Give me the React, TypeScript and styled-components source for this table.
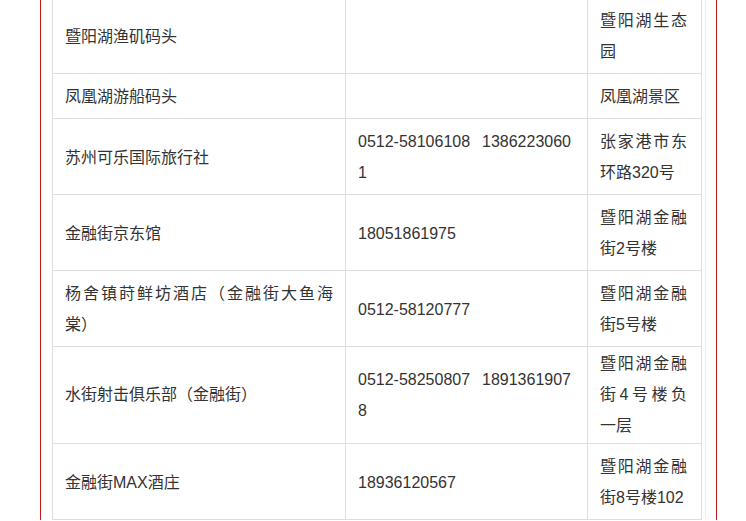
import React from "react";
import styled, { createGlobalStyle } from "styled-components";

const GlobalStyle = createGlobalStyle`
  html, body {
    margin: 0;
    padding: 0;
    background: #ffffff;
    overflow: hidden;
  }
`;

interface Place {
  name: string;
  phone: string;
  addr: string;
  tight?: boolean;
}

const places: Place[] = [
  { name: "暨阳湖渔矶码头", phone: "", addr: "暨阳湖生态园" },
  { name: "凤凰湖游船码头", phone: "", addr: "凤凰湖景区" },
  { name: "苏州可乐国际旅行社", phone: "0512-58106108  13862230601", addr: "张家港市东环路320号" },
  { name: "金融街京东馆", phone: "18051861975", addr: "暨阳湖金融街2号楼" },
  { name: "杨舍镇莳鲜坊酒店（金融街大鱼海棠）", phone: "0512-58120777", addr: "暨阳湖金融街5号楼" },
  { name: "水街射击俱乐部（金融街）", phone: "0512-58250807  18913619078", addr: "暨阳湖金融街4号楼负一层", tight: true },
  { name: "金融街MAX酒庄", phone: "18936120567", addr: "暨阳湖金融街8号楼102" },
];

function App() {
  return (
    <>
      <GlobalStyle />
      <StPage>
        <StFrame>
          <StTableBox>
            <StTable>
              <colgroup>
                <col style={{ width: 293 }} />
                <col style={{ width: 242 }} />
                <col style={{ width: 114 }} />
              </colgroup>
              <tbody>
                {places.map((p) => (
                  <tr key={p.name}>
                    <StCell $tight={p.tight}>{p.name}</StCell>
                    <StPhoneCell $tight={p.tight}>{p.phone}</StPhoneCell>
                    <StAddrCell $tight={p.tight}>{p.addr}</StAddrCell>
                  </tr>
                ))}
              </tbody>
            </StTable>
          </StTableBox>
        </StFrame>
      </StPage>
    </>
  );
}

const StPage = styled.div`
  width: 746px;
  height: 521px;
  overflow: hidden;
  background: #ffffff;
`;

const StFrame = styled.div`
  margin-left: 40px;
  width: 677px;
  min-height: 521px;
  border-left: 1px solid #c21a1a;
  border-right: 1px solid #c21a1a;
  padding-left: 11px;
  box-sizing: border-box;
`;

const StTableBox = styled.div`
  width: 654px;
  min-height: 521px;
  border-right: 1px solid #ececec;
  box-sizing: border-box;
  margin-top: -3px;
`;

const StTable = styled.table`
  width: 649px;
  border-collapse: collapse;
  table-layout: fixed;
  font-family: "Liberation Sans", "Noto Sans CJK SC", sans-serif;
  font-size: 16px;
  color: #333333;
`;

const StCell = styled.td<{ $tight?: boolean }>`
  border: 1px solid #dedede;
  padding: ${(p) => (p.$tight ? "1px 12px 2px" : "7px 12px 6px")};
  line-height: 31px;
  vertical-align: middle;
  text-align: justify;
  word-break: break-all;
  text-spacing-trim: space-all;
`;

const StPhoneCell = styled(StCell)`
  white-space: pre-wrap;
  padding-right: 16px;
`;

const StAddrCell = styled(StCell)`
  padding-right: 14px;
`;

export default App;
